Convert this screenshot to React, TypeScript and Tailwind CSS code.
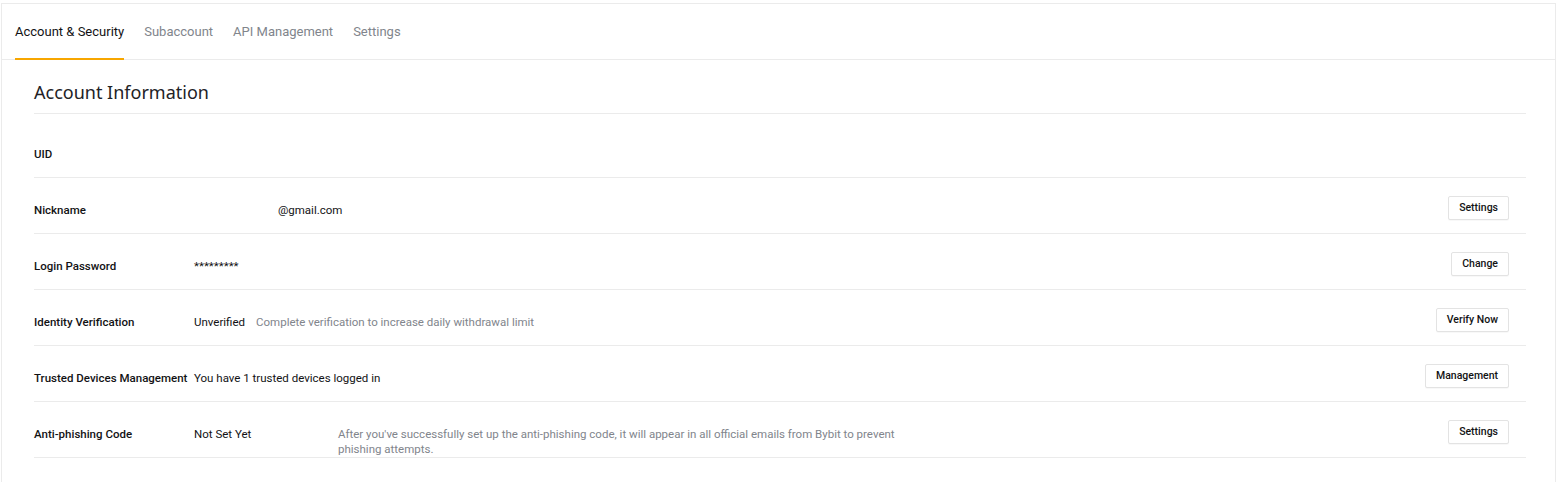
import React from "react";

const font = { fontFamily: 'Roboto, "Noto Sans", Arial, sans-serif' };

function Btn({ children }: { children: React.ReactNode }) {
  return (
    <button className="h-[24px] px-[10px] rounded-[2px] border border-[#e3e3e3] bg-white text-[10.5px] font-medium text-[#121214] leading-none shadow-[0_1px_1px_rgba(0,0,0,0.03)]">
      {children}
    </button>
  );
}

function Row({
  label,
  children,
  button,
}: {
  label: string;
  children?: React.ReactNode;
  button?: string;
}) {
  return (
    <div className="relative flex min-h-[56px] items-start border-b border-[#ebebeb] pt-[25px] text-[11.5px] leading-[15px]">
      <div className="w-[160px] shrink-0 font-medium text-[#121214] whitespace-nowrap">{label}</div>
      <div className="flex flex-1 text-[#121214]">{children}</div>
      {button && (
        <div className="absolute right-[17px] top-[18px]">
          <Btn>{button}</Btn>
        </div>
      )}
    </div>
  );
}

export default function App() {
  return (
    <div className="w-[1558px] h-[482px] bg-white pt-[3px] pl-[1px] pr-[2px]" style={font}>
      <div className="h-full border-l border-r border-t border-[#ebebeb] bg-white">
        <div className="flex h-[56px] gap-[20px] border-b border-[#ebebeb] pl-[13px]">
          <div className="relative flex items-center text-[13px] text-[#121214]">
            Account &amp; Security
            <div className="absolute bottom-[-1px] left-0 right-0 h-[2px] bg-[#f7a600]" />
          </div>
          <div className="flex items-center text-[13px] text-[#81858c]">Subaccount</div>
          <div className="flex items-center text-[13px] text-[#81858c]">API Management</div>
          <div className="flex items-center text-[13px] text-[#81858c]">Settings</div>
        </div>
        <div className="pl-[32px] pr-[29px]">
          <div className="flex h-[54px] items-end border-b border-[#ebebeb] pb-[9px]">
            <h1
              className="text-[18px] font-normal leading-[24px] text-[#222226]"
              style={{ fontFamily: '"Noto Sans", Arial, sans-serif' }}
            >
              Account Information
            </h1>
          </div>
          <div className="flex h-[64px] items-start border-b border-[#ebebeb] pt-[33px] text-[11.5px] leading-[15px]">
            <div className="font-medium text-[#121214]">UID</div>
          </div>
          <Row label="Nickname" button="Settings">
            <span className="inline-block w-[84px]" />
            <span>@gmail.com</span>
          </Row>
          <Row label="Login Password" button="Change">
            <span>*********</span>
          </Row>
          <Row label="Identity Verification" button="Verify Now">
            <span>Unverified</span>
            <span className="ml-[11px] text-[#81858c]">Complete verification to increase daily withdrawal limit</span>
          </Row>
          <Row label="Trusted Devices Management" button="Management">
            <span>You have 1 trusted devices logged in</span>
          </Row>
          <Row label="Anti-phishing Code" button="Settings">
            <span className="w-[144px] shrink-0">Not Set Yet</span>
            <span className="w-[560px] text-[#81858c]">
              After you've successfully set up the anti-phishing code, it will appear in all official emails from Bybit to prevent phishing attempts.
            </span>
          </Row>
        </div>
      </div>
    </div>
  );
}
